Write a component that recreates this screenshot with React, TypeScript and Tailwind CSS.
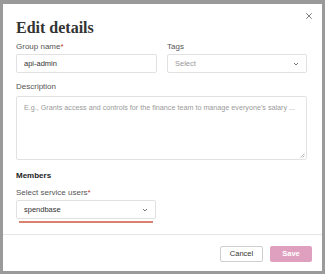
import { X } from "lucide-react";

function Chevron() {
  return (
    <svg width="6" height="4" viewBox="0 0 6 4" className="shrink-0">
      <polyline points="1,1 3,3 5,1" fill="none" stroke="#777" strokeWidth="1" />
    </svg>
  );
}

function Label({ text, required }: { text: string; required?: boolean }) {
  return (
    <p className="text-[8px] leading-[10px] text-[#555]">
      {text}
      {required && <span className="text-[#c0392b]">*</span>}
    </p>
  );
}

export default function App() {
  return (
    <div
      className="h-[274px] w-[325px] overflow-hidden bg-[#9a9a9a] pb-[3px] pl-[3px] pr-[3px] pt-[4px]"
      style={{ fontFamily: '"Liberation Sans", Arial, sans-serif' }}
    >
      <div className="relative flex h-full flex-col bg-white">
        <button className="absolute right-[8px] top-[7px] text-[#555]">
          <X size={10} strokeWidth={1.8} />
        </button>

        <div className="px-[13px] pt-[14px]">
          <h1
            className="text-[16px] font-bold leading-[20px] text-[#333]"
            style={{ fontFamily: '"Liberation Serif", "Times New Roman", serif' }}
          >
            Edit details
          </h1>

          <div className="mt-[4px] grid grid-cols-[141px_140px] gap-x-[10px]">
            <div>
              <Label text="Group name" required />
              <div className="mt-[2px] flex h-[19px] items-center rounded-[2px] border border-[#e2e2e2] px-[7px] text-[7.5px] text-[#333]">
                api-admin
              </div>
            </div>
            <div>
              <Label text="Tags" />
              <div className="mt-[2px] flex h-[19px] items-center justify-between rounded-[2px] border border-[#e2e2e2] px-[7px] text-[7.5px] text-[#999]">
                <span>Select</span>
                <Chevron />
              </div>
            </div>
          </div>

          <div className="mt-[9px]">
            <Label text="Description" />
            <div className="relative mt-[4px] h-[64px] w-[291px] rounded-[2px] border border-[#e2e2e2] px-[7px] pt-[6px] text-[7.2px] leading-[10px] text-[#9a9a9a]">
              E.g., Grants access and controls for the finance team to manage everyone's salary ...
              <svg width="5" height="5" viewBox="0 0 5 5" className="absolute bottom-[1px] right-[1px]">
                <line x1="0.5" y1="4.5" x2="4.5" y2="0.5" stroke="#aaa" strokeWidth="0.8" />
                <line x1="2.5" y1="4.5" x2="4.5" y2="2.5" stroke="#aaa" strokeWidth="0.8" />
              </svg>
            </div>
          </div>

          <p className="mt-[11px] text-[8px] font-bold leading-[10px] text-[#222]">Members</p>

          <div className="mt-[7px] w-[140px]">
            <Label text="Select service users" required />
            <div className="mt-[2px] flex h-[19px] items-center justify-between rounded-[2px] border border-[#e2e2e2] px-[7px] text-[7.5px] text-[#333]">
              <span>spendbase</span>
              <Chevron />
            </div>
            <div className="mx-[3px] mt-[2px] h-[2px] bg-[#d9826f]" />
          </div>
        </div>

        <div className="mt-[11px] border-t border-[#e6e6e6]" />

        <div className="flex justify-end gap-[7px] pr-[10px] pt-[11px]">
          <button className="h-[16px] w-[43px] rounded-[2px] border border-[#cfcfcf] bg-white text-[7.5px] text-[#333]">
            Cancel
          </button>
          <button className="h-[16px] w-[42px] rounded-[2px] bg-[#df9fbe] text-[7.5px] font-semibold text-white">
            Save
          </button>
        </div>
      </div>
    </div>
  );
}
